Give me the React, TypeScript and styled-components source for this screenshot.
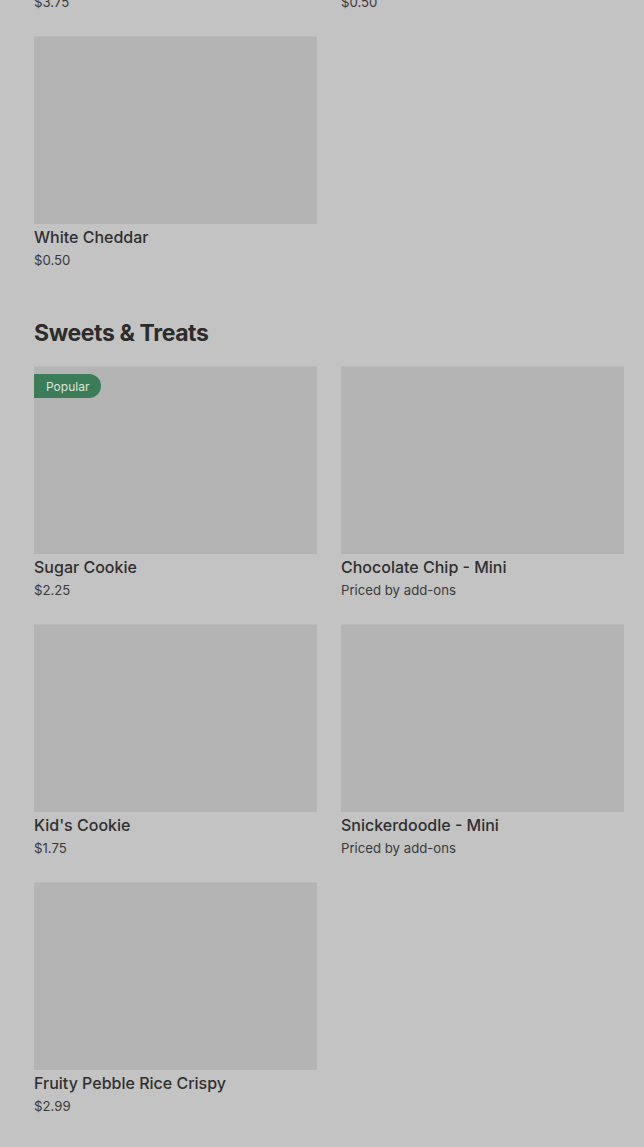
import styled, { createGlobalStyle } from 'styled-components';

const GlobalStyle = createGlobalStyle`
  body {
    margin: 0;
    background: #c3c3c3;
    font-family: Inter, "Noto Sans", sans-serif;
    color: #2f2f2f;
  }
`;

const Page = styled.div`
  padding: 0 20px 40px 34px;
  overflow: hidden;
`;

const Grid = styled.div<{ $top?: boolean }>`
  display: grid;
  grid-template-columns: 1fr 1fr;
  column-gap: 24px;
  row-gap: 24px;
  margin-top: ${(p) => (p.$top ? '-8px' : '0')};
`;

const Card = styled.div`
  display: flex;
  flex-direction: column;
  min-width: 0;
`;

const Thumb = styled.div`
  position: relative;
  height: 188px;
  background: #b4b4b4;
  border-top: 1px solid #bababa;
  box-sizing: border-box;
`;

const Badge = styled.span`
  position: absolute;
  top: 7px;
  left: 0;
  height: 24px;
  padding: 0 12px;
  display: flex;
  align-items: center;
  background: #3b7d59;
  color: #d9e6de;
  font-size: 12px;
  border-radius: 0 12px 12px 0;
`;

const Name = styled.div`
  margin-top: 3px;
  font-size: 16px;
  line-height: 20px;
  font-weight: 500;
  color: #2f2f2f;
`;

const Price = styled.div<{ $flush?: boolean }>`
  margin-top: ${(p) => (p.$flush ? '0' : '3px')};
  font-size: 13.2px;
  line-height: 20px;
  color: #3a3a3a;
`;

const Heading = styled.h2`
  margin: 49px 0 19px;
  font-size: 23px;
  line-height: 28px;
  font-weight: 700;
  letter-spacing: -0.4px;
  color: #2c2c2c;
`;

type Item = { name: string; price: string; popular?: boolean };

const sweets: Item[] = [
  { name: 'Sugar Cookie', price: '$2.25', popular: true },
  { name: 'Chocolate Chip - Mini', price: 'Priced by add-ons' },
  { name: "Kid's Cookie", price: '$1.75' },
  { name: 'Snickerdoodle - Mini', price: 'Priced by add-ons' },
  { name: 'Fruity Pebble Rice Crispy', price: '$2.99' },
];

const ItemCard = ({ item }: { item: Item }) => (
  <Card>
    <Thumb>{item.popular && <Badge>Popular</Badge>}</Thumb>
    <Name>{item.name}</Name>
    <Price>{item.price}</Price>
  </Card>
);

export default function App() {
  return (
    <Page>
      <GlobalStyle />
      <Grid $top>
        <Card>
          <Price $flush>$3.75</Price>
        </Card>
        <Card>
          <Price $flush>$0.50</Price>
        </Card>
        <ItemCard item={{ name: 'White Cheddar', price: '$0.50' }} />
      </Grid>
      <Heading>Sweets &amp; Treats</Heading>
      <Grid>
        {sweets.map((s) => (
          <ItemCard key={s.name} item={s} />
        ))}
      </Grid>
    </Page>
  );
}
